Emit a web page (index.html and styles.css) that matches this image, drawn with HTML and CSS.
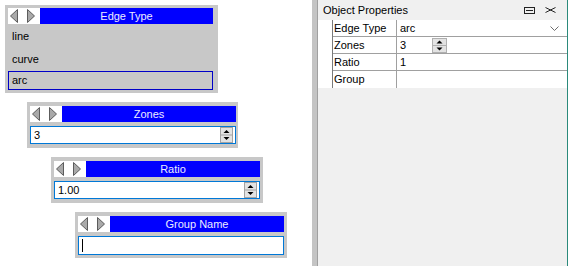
FILE: index.html
```html
<!DOCTYPE html>
<html lang="en">
<head>
    <meta charset="UTF-8">
    <title>Edge Properties</title>
    <link rel="stylesheet" href="styles.css">
</head>
<body>
    <div class="page">
        <div class="stack">
            <!-- Edge type list -->
            <div class="widget w-edge">
                <div class="head">
                    <span class="nav">
                        <svg width="32" height="16" viewBox="0 0 32 16">
                            <polygon points="2.5,8 9.5,1.5 9.5,14.5" fill="#a9a9a9" stroke="#5c5c5c"/>
                            <polygon points="19.5,1.5 26.5,8 19.5,14.5" fill="#a9a9a9" stroke="#5c5c5c"/>
                        </svg>
                    </span>
                    <span class="title">Edge Type</span>
                </div>
                <ul class="options">
                    <li>line</li>
                    <li>curve</li>
                    <li class="sel">arc</li>
                </ul>
            </div>

            <!-- Zones -->
            <div class="widget w-zones">
                <div class="head">
                    <span class="nav">
                        <svg width="32" height="16" viewBox="0 0 32 16">
                            <polygon points="2.5,8 9.5,1.5 9.5,14.5" fill="#a9a9a9" stroke="#5c5c5c"/>
                            <polygon points="19.5,1.5 26.5,8 19.5,14.5" fill="#a9a9a9" stroke="#5c5c5c"/>
                        </svg>
                    </span>
                    <span class="title">Zones</span>
                </div>
                <div class="field">
                    <span class="val">3</span>
                    <svg class="spin" width="13" height="16" viewBox="0 0 13 16">
                        <rect x="0.5" y="0.5" width="12" height="15" fill="#e3e3e3" stroke="#a3a3a3"/>
                        <line x1="1" y1="8" x2="12" y2="8" stroke="#a3a3a3"/>
                        <polygon points="3.5,6 9.5,6 6.5,3" fill="#000"/>
                        <polygon points="3.5,10 9.5,10 6.5,13" fill="#000"/>
                    </svg>
                </div>
            </div>

            <!-- Ratio -->
            <div class="widget w-ratio">
                <div class="head">
                    <span class="nav">
                        <svg width="32" height="16" viewBox="0 0 32 16">
                            <polygon points="2.5,8 9.5,1.5 9.5,14.5" fill="#a9a9a9" stroke="#5c5c5c"/>
                            <polygon points="19.5,1.5 26.5,8 19.5,14.5" fill="#a9a9a9" stroke="#5c5c5c"/>
                        </svg>
                    </span>
                    <span class="title">Ratio</span>
                </div>
                <div class="field">
                    <span class="val">1.00</span>
                    <svg class="spin" width="13" height="16" viewBox="0 0 13 16">
                        <rect x="0.5" y="0.5" width="12" height="15" fill="#e3e3e3" stroke="#a3a3a3"/>
                        <line x1="1" y1="8" x2="12" y2="8" stroke="#a3a3a3"/>
                        <polygon points="3.5,6 9.5,6 6.5,3" fill="#000"/>
                        <polygon points="3.5,10 9.5,10 6.5,13" fill="#000"/>
                    </svg>
                </div>
            </div>

            <!-- Group name -->
            <div class="widget w-group">
                <div class="head">
                    <span class="nav">
                        <svg width="32" height="16" viewBox="0 0 32 16">
                            <polygon points="2.5,8 9.5,1.5 9.5,14.5" fill="#a9a9a9" stroke="#5c5c5c"/>
                            <polygon points="19.5,1.5 26.5,8 19.5,14.5" fill="#a9a9a9" stroke="#5c5c5c"/>
                        </svg>
                    </span>
                    <span class="title">Group Name</span>
                </div>
                <div class="field text-field">
                    <span class="caret"></span>
                </div>
            </div>
        </div>

        <div class="dock">
            <div class="props">
                <div class="props-title">
                    <span>Object Properties</span>
                    <span class="tools">
                        <svg width="11" height="7" viewBox="0 0 11 7">
                            <rect x="0.5" y="0.5" width="10" height="6" fill="none" stroke="#222"/>
                            <line x1="2" y1="3.5" x2="9" y2="3.5" stroke="#222"/>
                        </svg>
                        <svg width="11" height="6" viewBox="0 0 11 6">
                            <path d="M0.5 0.5 L10.5 5.5 M10.5 0.5 L0.5 5.5" stroke="#222" fill="none"/>
                        </svg>
                    </span>
                </div>
                <div class="grid">
                    <span class="gut"></span>
                    <span class="name">Edge Type</span>
                    <span class="value">arc
                        <svg class="chev" width="9" height="5" viewBox="0 0 9 5">
                            <polyline points="0.5,0.5 4.5,4.5 8.5,0.5" fill="none" stroke="#6d6d6d"/>
                        </svg>
                    </span>

                    <span class="gut"></span>
                    <span class="name">Zones</span>
                    <span class="value"><span class="num">3</span>
                        <svg width="15" height="15" viewBox="0 0 15 15">
                            <rect x="0.5" y="0.5" width="14" height="14" fill="#e3e3e3" stroke="#b0b0b0"/>
                            <line x1="1" y1="7.5" x2="14" y2="7.5" stroke="#b0b0b0"/>
                            <polygon points="4.5,5.5 10.5,5.5 7.5,2.5" fill="#000"/>
                            <polygon points="4.5,9.5 10.5,9.5 7.5,12.5" fill="#000"/>
                        </svg>
                    </span>

                    <span class="gut"></span>
                    <span class="name">Ratio</span>
                    <span class="value">1</span>

                    <span class="gut"></span>
                    <span class="name last">Group</span>
                    <span class="value last"></span>
                </div>
            </div>
        </div>
    </div>
</body>
</html>
```

FILE: styles.css
```css
body {
    margin: 0;
    font-family: "Liberation Sans", Arial, sans-serif;
    font-size: 11px;
    color: #000;
    background: #fff;
}

.page {
    display: flex;
    height: 275px;
}

.stack {
    width: 312px;
    flex-shrink: 0;
    padding-top: 5px;
    display: flex;
    flex-direction: column;
    align-items: flex-start;
    gap: 9px;
    box-sizing: border-box;
}

.widget {
    background: #c8c8c8;
    box-sizing: border-box;
}

.w-edge {
    margin-left: 5px;
    width: 213px;
    padding: 3px 5px 3px 3px;
}

.w-zones {
    margin-left: 27px;
    width: 211px;
    padding: 4px 2px 4px 3px;
}

.w-ratio {
    margin-left: 51px;
    width: 212px;
    padding: 4px 3px 4px 3px;
}

.w-group {
    margin-left: 75px;
    width: 212px;
    padding: 4px 3px 3px 3px;
}

.head {
    display: flex;
    height: 16px;
}

.nav {
    width: 32px;
    background: #fff;
    display: flex;
}

.title {
    flex: 1;
    background: #0000ff;
    color: #ececff;
    text-align: center;
    line-height: 16px;
    font-size: 11px;
}

.options {
    list-style: none;
    margin: 1px 0 0 0;
    padding: 0;
}

.options li {
    height: 23px;
    line-height: 23px;
    padding-left: 4px;
}

.options li.sel {
    height: 19px;
    line-height: 17px;
    border: 1px solid #0000c8;
    padding-left: 3px;
    box-sizing: border-box;
}

.field {
    margin-top: 4px;
    height: 18px;
    background: #fff;
    border: 1px solid #0078d7;
    box-sizing: border-box;
    display: flex;
    align-items: center;
    padding: 0 2px 0 3px;
}

.field .val {
    flex: 1;
}

.text-field {
    height: 19px;
}

.caret {
    width: 1px;
    height: 13px;
    background: #000;
}

.dock {
    width: 256px;
    height: 266px;
    flex-shrink: 0;
    border-left: 5px solid #c4c4c4;
    box-sizing: border-box;
}

.props {
    height: 100%;
    background: #f0f0f0;
    border-left: 1px solid #a0a0a0;
    border-right: 1px solid #2b8a7b;
    box-sizing: border-box;
}

.props-title {
    height: 20px;
    display: flex;
    align-items: center;
    justify-content: space-between;
    padding: 0 11px 0 5px;
    font-size: 11px;
}

.tools {
    display: flex;
    align-items: center;
    gap: 10px;
}

.grid {
    display: grid;
    grid-template-columns: 15px 64px 1fr;
    background: #fff;
}

.grid > span {
    height: 17px;
    line-height: 16px;
    box-sizing: border-box;
}

.grid .gut {
    border-right: 1px solid #7a7a7a;
}

.grid .name {
    border-right: 1px solid #a0a0a0;
    border-bottom: 1px solid #a0a0a0;
    padding-left: 1px;
}

.grid .value {
    border-bottom: 1px solid #a0a0a0;
    padding: 0 8px 0 3px;
    display: flex;
    align-items: center;
}

.grid .last {
    border-bottom: none;
}

.grid .num {
    width: 32px;
}

.chev {
    margin-left: auto;
}
```
